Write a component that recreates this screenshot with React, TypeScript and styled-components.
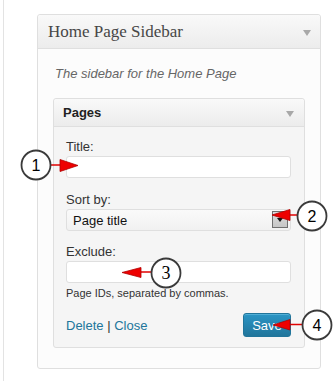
import React from 'react';
import styled, { createGlobalStyle } from 'styled-components';

const GlobalStyle = createGlobalStyle`
  html, body {
    margin: 0;
    padding: 0;
    background: #ffffff;
  }
  body {
    font-family: "Liberation Sans", Arial, sans-serif;
  }
`;

const Page = styled.div`
  position: relative;
  width: 334px;
  height: 381px;
  padding-left: 3px;
  box-sizing: border-box;
  overflow: hidden;
`;

const Rail = styled.div`
  height: 100%;
  border-left: 1px solid #e3e3e3;
  padding-top: 14px;
  padding-left: 33px;
  box-sizing: border-box;
`;

const Widget = styled.div<{ $inner?: boolean }>`
  width: ${(p) => (p.$inner ? '252px' : '284px')};
  box-sizing: border-box;
  border: 1px solid #dfdfdf;
  border-radius: 3px;
  background: ${(p) => (p.$inner ? '#f5f5f5' : '#fcfcfc')};
  box-shadow: 0 1px 0 #fff inset;
`;

const WidgetHead = styled.div<{ $inner?: boolean }>`
  display: flex;
  align-items: center;
  justify-content: space-between;
  height: ${(p) => (p.$inner ? '27px' : '33px')};
  padding: ${(p) => (p.$inner ? '0 10px 0 9px' : '0 9px 0 10px')};
  background: linear-gradient(to bottom, #f9f9f9, #ececec);
  border-bottom: 1px solid #dfdfdf;
  border-radius: 3px 3px 0 0;
`;

const HeadTitle = styled.span`
  font-family: "Liberation Serif", "Times New Roman", serif;
  font-size: 17px;
  color: #464646;
`;

const InnerTitle = styled.span`
  font-family: "Liberation Sans", Arial, sans-serif;
  font-weight: bold;
  font-size: 13px;
  color: #222;
`;

const Toggle = styled.span`
  width: 0;
  height: 0;
  border-left: 4px solid transparent;
  border-right: 4px solid transparent;
  border-top: 6px solid #a8a8a8;
  margin-top: 2px;
`;

const OuterBody = styled.div`
  padding: 17px 15px 20px 15px;
`;

const Description = styled.p`
  margin: 0 0 16px 2px;
  font-style: italic;
  font-size: 13px;
  line-height: 16px;
  color: #666;
`;

const InnerBody = styled.div`
  padding: 12px 13px 10px 12px;
`;

const Label = styled.label<{ $gap?: number }>`
  display: block;
  margin-top: ${(p) => p.$gap ?? 0}px;
  margin-bottom: 1px;
  font-size: 13px;
  line-height: 16px;
  color: #333;
`;

const TextInput = styled.div`
  height: 22px;
  box-sizing: border-box;
  border: 1px solid #dfdfdf;
  border-radius: 3px;
  background: #fff;
`;

const Select = styled.div`
  position: relative;
  display: flex;
  align-items: center;
  height: 22px;
  box-sizing: border-box;
  padding-left: 6px;
  border: 1px solid #dfdfdf;
  border-radius: 3px;
  background: linear-gradient(to bottom, #fafafa, #f1f1f1);
  font-size: 13px;
  color: #111;
`;

const SelectButton = styled.span`
  position: absolute;
  right: 2px;
  top: 1px;
  width: 16px;
  height: 17px;
  box-sizing: border-box;
  border: 1px solid #6f6f6f;
  background: linear-gradient(to bottom, #dcdcdc, #c6c6c6);
  &::after {
    content: '';
    position: absolute;
    left: 4px;
    top: 6px;
    border-left: 3px solid transparent;
    border-right: 3px solid transparent;
    border-top: 4px solid #111;
  }
`;

const Hint = styled.div`
  margin-top: 3px;
  font-size: 11px;
  line-height: 14px;
  color: #333;
`;

const Actions = styled.div`
  display: flex;
  align-items: center;
  justify-content: space-between;
  margin-top: 13px;
`;

const Links = styled.div`
  font-size: 13px;
  color: #21759b;
`;

const Sep = styled.span`
  color: #333;
`;

const SaveButton = styled.div`
  width: 48px;
  height: 24px;
  box-sizing: border-box;
  display: flex;
  align-items: center;
  justify-content: center;
  border: 1px solid #21759b;
  border-radius: 3px;
  background: linear-gradient(to bottom, #2a95c5, #21759b);
  color: #fff;
  font-size: 13px;
  box-shadow: inset 0 1px 0 rgba(120, 200, 230, 0.5);
`;

const Overlay = styled.svg`
  position: absolute;
  left: 0;
  top: 0;
  pointer-events: none;
`;

type Callout = {
  n: string;
  cx: number;
  cy: number;
  ly: number;
  serif?: boolean;
  line: [number, number];
  head: string;
};

// numbered callouts with red arrows, drawn on top of the form
const callouts: Callout[] = [
  { n: '1', cx: 36, cy: 165, ly: 165, line: [50, 63], head: '60,159.5 60,171.5 78,165.5' },
  { n: '2', cx: 312, cy: 216, ly: 215, line: [298, 289], head: '290,209.5 290,220.5 272,215' },
  { n: '3', cx: 166, cy: 273, ly: 272, serif: true, line: [151, 140], head: '141,267.5 141,277.5 122,272.5' },
  { n: '4', cx: 317, cy: 325, ly: 324.5, line: [302, 289], head: '290,319.5 290,330 273,325' },
];

function Callouts() {
  return (
    <Overlay width="334" height="381" viewBox="0 0 334 381">
      {callouts.map((c) => (
        <g key={c.n}>
          <line x1={c.line[0]} x2={c.line[1]} y1={c.ly} y2={c.ly} stroke="#e00000" strokeWidth="1.5" />
          <polygon points={c.head} fill="#ee0000" stroke="#b00000" strokeWidth="0.8" />
          <circle cx={c.cx} cy={c.cy} r="14.5" fill="#fff" stroke="#3a3a3a" strokeWidth="1.8" />
          <text
            x={c.cx}
            y={c.cy + 6}
            textAnchor="middle"
            fontSize={c.serif ? 18 : 16}
            fontFamily={c.serif ? '"Liberation Serif", serif' : '"Liberation Sans", Arial, sans-serif'}
            fill="#000"
          >
            {c.n}
          </text>
        </g>
      ))}
    </Overlay>
  );
}

export default function App() {
  return (
    <Page>
      <GlobalStyle />
      <Rail>
        <Widget>
          <WidgetHead>
            <HeadTitle>Home Page Sidebar</HeadTitle>
            <Toggle />
          </WidgetHead>
          <OuterBody>
            <Description>The sidebar for the Home Page</Description>
            <Widget $inner>
              <WidgetHead $inner>
                <InnerTitle>Pages</InnerTitle>
                <Toggle />
              </WidgetHead>
              <InnerBody>
                <Label>Title:</Label>
                <TextInput />
                <Label $gap={14}>Sort by:</Label>
                <Select>
                  Page title
                  <SelectButton />
                </Select>
                <Label $gap={13}>Exclude:</Label>
                <TextInput />
                <Hint>Page IDs, separated by commas.</Hint>
                <Actions>
                  <Links>
                    Delete <Sep>|</Sep> Close
                  </Links>
                  <SaveButton>Save</SaveButton>
                </Actions>
              </InnerBody>
            </Widget>
          </OuterBody>
        </Widget>
      </Rail>
      <Callouts />
    </Page>
  );
}
